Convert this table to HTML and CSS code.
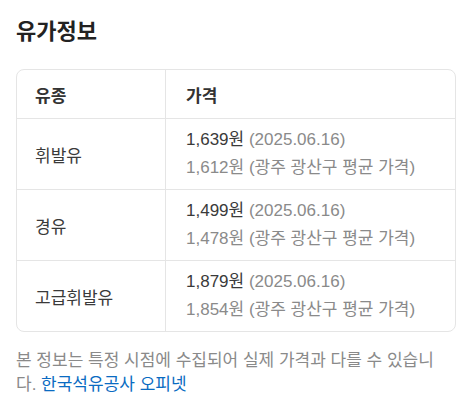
FILE: index.html
```html
<!DOCTYPE HTML>
<html lang="ko">
<head>
    <meta charset="utf-8">
    <meta name="viewport" content="width=device-width, initial-scale=1.0">
    <title>유가정보</title>
    <link rel="stylesheet" href="styles.css">
</head>
<body>
    <div class="oil-info">
        <h2 class="title">유가정보</h2>

        <div class="table-wrap">
            <table class="price-table">
                <thead>
                    <tr>
                        <th class="col-type">유종</th>
                        <th>가격</th>
                    </tr>
                </thead>
                <tbody>
                    <tr>
                        <td class="col-type">휘발유</td>
                        <td>
                            <div class="price">1,639원 <span class="date">(2025.06.16)</span></div>
                            <div class="avg">1,612원 (광주 광산구 평균 가격)</div>
                        </td>
                    </tr>
                    <tr>
                        <td class="col-type">경유</td>
                        <td>
                            <div class="price">1,499원 <span class="date">(2025.06.16)</span></div>
                            <div class="avg">1,478원 (광주 광산구 평균 가격)</div>
                        </td>
                    </tr>
                    <tr>
                        <td class="col-type">고급휘발유</td>
                        <td>
                            <div class="price">1,879원 <span class="date">(2025.06.16)</span></div>
                            <div class="avg">1,854원 (광주 광산구 평균 가격)</div>
                        </td>
                    </tr>
                </tbody>
            </table>
        </div>

        <p class="note">본 정보는 특정 시점에 수집되어 실제 가격과 다를 수 있습니다. <a href="#">한국석유공사 오피넷</a></p>
    </div>
</body>
</html>
```

FILE: styles.css
```css
body {
    margin: 0;
    font-family: "Liberation Sans", "Noto Sans CJK KR", sans-serif;
    background: #fff;
    color: #333;
}
.oil-info {
    width: 440px;
    padding: 16px;
}
.title {
    margin: 3px 0 24px;
    font-size: 22px;
    font-weight: bold;
    color: #222;
    line-height: 26px;
}
.table-wrap {
    border: 1px solid #e5e5e5;
    border-radius: 8px;
    overflow: hidden;
}
.price-table {
    width: 100%;
    border-collapse: collapse;
    font-size: 17px;
}
.price-table th,
.price-table td {
    text-align: left;
    padding: 0 20px;
    border-bottom: 1px solid #e5e5e5;
}
.price-table th {
    height: 48px;
    font-weight: bold;
    color: #333;
}
.price-table td {
    height: 70px;
    color: #3a3a3a;
}
.price-table tr:last-child td {
    border-bottom: none;
}
.price-table .col-type {
    width: 110px;
    padding-left: 18px;
    border-right: 1px solid #e5e5e5;
}
.price {
    line-height: 28px;
}
.date,
.avg {
    color: #8a8a8a;
}
.avg {
    line-height: 28px;
}
.note {
    margin: 17px 10px 0 0;
    font-size: 17px;
    line-height: 24px;
    color: #8a8a8a;
    word-break: break-all;
}
.note a {
    color: #0a6bc2;
    text-decoration: none;
}
```
